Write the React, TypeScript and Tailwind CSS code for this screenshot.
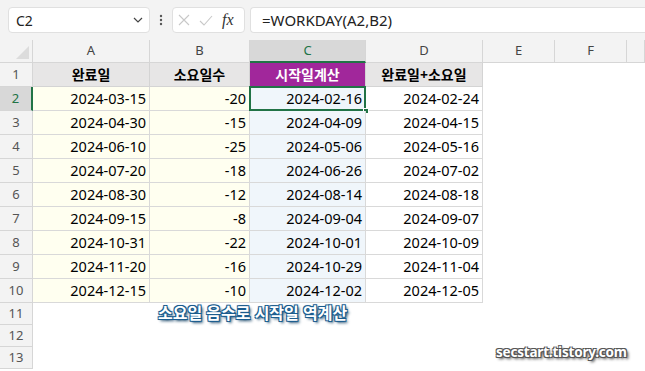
import React from "react";

const rows = [
  ["2024-03-15", "-20", "2024-02-16", "2024-02-24"],
  ["2024-04-30", "-15", "2024-04-09", "2024-04-15"],
  ["2024-06-10", "-25", "2024-05-06", "2024-05-16"],
  ["2024-07-20", "-18", "2024-06-26", "2024-07-02"],
  ["2024-08-30", "-12", "2024-08-14", "2024-08-18"],
  ["2024-09-15", "-8", "2024-09-04", "2024-09-07"],
  ["2024-10-31", "-22", "2024-10-01", "2024-10-09"],
  ["2024-11-20", "-16", "2024-10-29", "2024-11-04"],
  ["2024-12-15", "-10", "2024-12-02", "2024-12-05"],
];

const font = { fontFamily: '"Noto Sans", "Noto Sans CJK KR", sans-serif' };

export default function App() {
  const cols = "grid-cols-[33px_117px_100px_116px_117px_72px_72px_1fr]";
  return (
    <div className="w-[645px] h-[371px] overflow-hidden bg-white relative text-black" style={font}>
      {/* formula bar */}
      <div className="h-[40px] bg-[#f3f3f3] flex items-start pt-[7px] pl-[8px] gap-0">
        <div className="w-[142px] h-[26px] bg-white rounded-[4px] border border-[#e0e0e0] flex items-center justify-between pl-[7px] pr-[6px]">
          <span className="text-[14px] text-[#222]">C2</span>
          <svg width="10" height="6" viewBox="0 0 10 6"><path d="M1 1 L5 5 L9 1" fill="none" stroke="#444" strokeWidth="1.2" /></svg>
        </div>
        <div className="w-[22px] h-[26px] flex items-center justify-center">
          <svg width="4" height="12" viewBox="0 0 4 12"><circle cx="2" cy="2" r="1.2" fill="#555" /><circle cx="2" cy="6" r="1.2" fill="#555" /><circle cx="2" cy="10" r="1.2" fill="#555" /></svg>
        </div>
        <div className="w-[73px] h-[26px] bg-white rounded-[4px] border border-[#e0e0e0] flex items-center pl-[5px] gap-[9px]">
          <svg width="12" height="12" viewBox="0 0 12 12"><path d="M1 1 L11 11 M11 1 L1 11" stroke="#c8c8c8" strokeWidth="1.1" /></svg>
          <svg width="14" height="11" viewBox="0 0 14 11"><path d="M1 6 L5 10 L13 1" fill="none" stroke="#c8c8c8" strokeWidth="1.1" /></svg>
          <span className="text-[16px] italic text-[#333] leading-none" style={{ fontFamily: '"Liberation Serif", serif' }}>fx</span>
        </div>
        <div className="ml-[5px] flex-1 h-[26px] bg-white rounded-l-[4px] border border-r-0 border-[#e0e0e0] flex items-center pl-[11px]">
          <span className="text-[15px] text-[#222]">=WORKDAY(A2,B2)</span>
        </div>
      </div>

      {/* grid */}
      <div className={`grid ${cols} text-[14.5px]`}>
        {/* column header */}
        <div className="h-[23px] bg-[#f3f3f3] border-r border-b border-[#d6d6d6] relative">
          <div className="absolute right-[3px] bottom-[3px] w-0 h-0 border-l-[13px] border-l-transparent border-b-[13px] border-b-[#dcdcdc]" />
        </div>
        {["A", "B", "C", "D", "E", "F", ""].map((c) => (
          <div
            key={c || "x"}
            className={`h-[23px] flex items-center justify-center text-[13px] border-r ${
              c === "C"
                ? "bg-[#d8d8d8] text-[#217346] border-b-2 border-b-[#217346] border-r-[#d6d6d6]"
                : "bg-[#f3f3f3] text-[#444] border-b border-[#d6d6d6]"
            }`}
          >
            {c}
          </div>
        ))}

        {/* row 1 */}
        <div className="h-[24px] bg-[#f3f3f3] border-r border-b border-[#d6d6d6] flex items-center justify-center text-[13px] text-[#555]">1</div>
        <div className="h-[24px] bg-[#e7e6e6] border-r border-b border-[#d4d4d4] flex items-center justify-center font-bold text-[14px]">완료일</div>
        <div className="h-[24px] bg-[#e7e6e6] border-r border-b border-[#d4d4d4] flex items-center justify-center font-bold text-[14px]">소요일수</div>
        <div className="h-[24px] bg-[#a1279b] border-r border-b border-[#d4d4d4] flex items-center justify-center font-bold text-white text-[14px]">시작일계산</div>
        <div className="h-[24px] bg-[#e7e6e6] border-r border-b border-[#d4d4d4] flex items-center justify-center font-bold text-[14px]">완료일+소요일</div>
        <div className="h-[24px]" />
        <div className="h-[24px]" />
        <div className="h-[24px]" />

        {rows.map((r, i) => {
          const sel = i === 0;
          return (
            <React.Fragment key={i}>
              <div
                className={`h-[24px] border-b border-[#d6d6d6] flex items-center justify-center text-[13px] ${
                  sel ? "bg-[#d8d8d8] text-[#217346] border-r-2 border-r-[#217346]" : "bg-[#f3f3f3] text-[#555] border-r"
                }`}
              >
                {i + 2}
              </div>
              <div className="h-[24px] bg-[#fffff0] border-r border-b border-[#d9d9d9] flex items-center justify-end pr-[3px]">{r[0]}</div>
              <div className="h-[24px] bg-[#fffff0] border-r border-b border-[#d9d9d9] flex items-center justify-end pr-[3px]">{r[1]}</div>
              <div className="h-[24px] bg-[#f0f6fb] border-r border-b border-[#d9d9d9] flex items-center justify-end pr-[3px] relative">
                {r[2]}
                {sel && (
                  <>
                    <div className="absolute left-[-1px] top-[-1px] right-[-1px] bottom-[-1px] border-2 border-[#217346]" />
                    <div className="absolute right-[-4px] bottom-[-4px] w-[6px] h-[6px] bg-[#217346] border border-white" />
                  </>
                )}
              </div>
              <div className="h-[24px] bg-white border-r border-b border-[#d9d9d9] flex items-center justify-end pr-[3px]">{r[3]}</div>
              <div className="h-[24px]" />
              <div className="h-[24px]" />
              <div className="h-[24px]" />
            </React.Fragment>
          );
        })}

        {[11, 12, 13].map((n) => (
          <React.Fragment key={n}>
            <div className="h-[22px] bg-[#f3f3f3] border-r border-b border-[#d6d6d6] flex items-center justify-center text-[13px] text-[#555]">{n}</div>
            <div className="h-[22px] col-span-7" />
          </React.Fragment>
        ))}
      </div>

      {/* overlays */}
      <div
        className="absolute left-[158px] top-[301px] text-[16px] font-bold text-white"
        style={{
          ...font,
          textShadow:
            "0 0 2px #1b5d8f, 1px 1px 0 #1b5d8f, -1px -1px 0 #1b5d8f, 1px -1px 0 #1b5d8f, -1px 1px 0 #1b5d8f, 2px 2px 3px #0b3a5e",
        }}
      >
        소요일 음수로 시작일 역계산
      </div>
      <div
        className="absolute left-[496px] top-[342px] text-[13.5px] font-bold text-white tracking-[-0.2px]"
        style={{
          ...font,
          textShadow:
            "1px 1px 0 #555, -1px -1px 0 #555, 1px -1px 0 #555, -1px 1px 0 #555, 2px 2px 3px #333",
        }}
      >
        secstart.tistory.com
      </div>
    </div>
  );
}
